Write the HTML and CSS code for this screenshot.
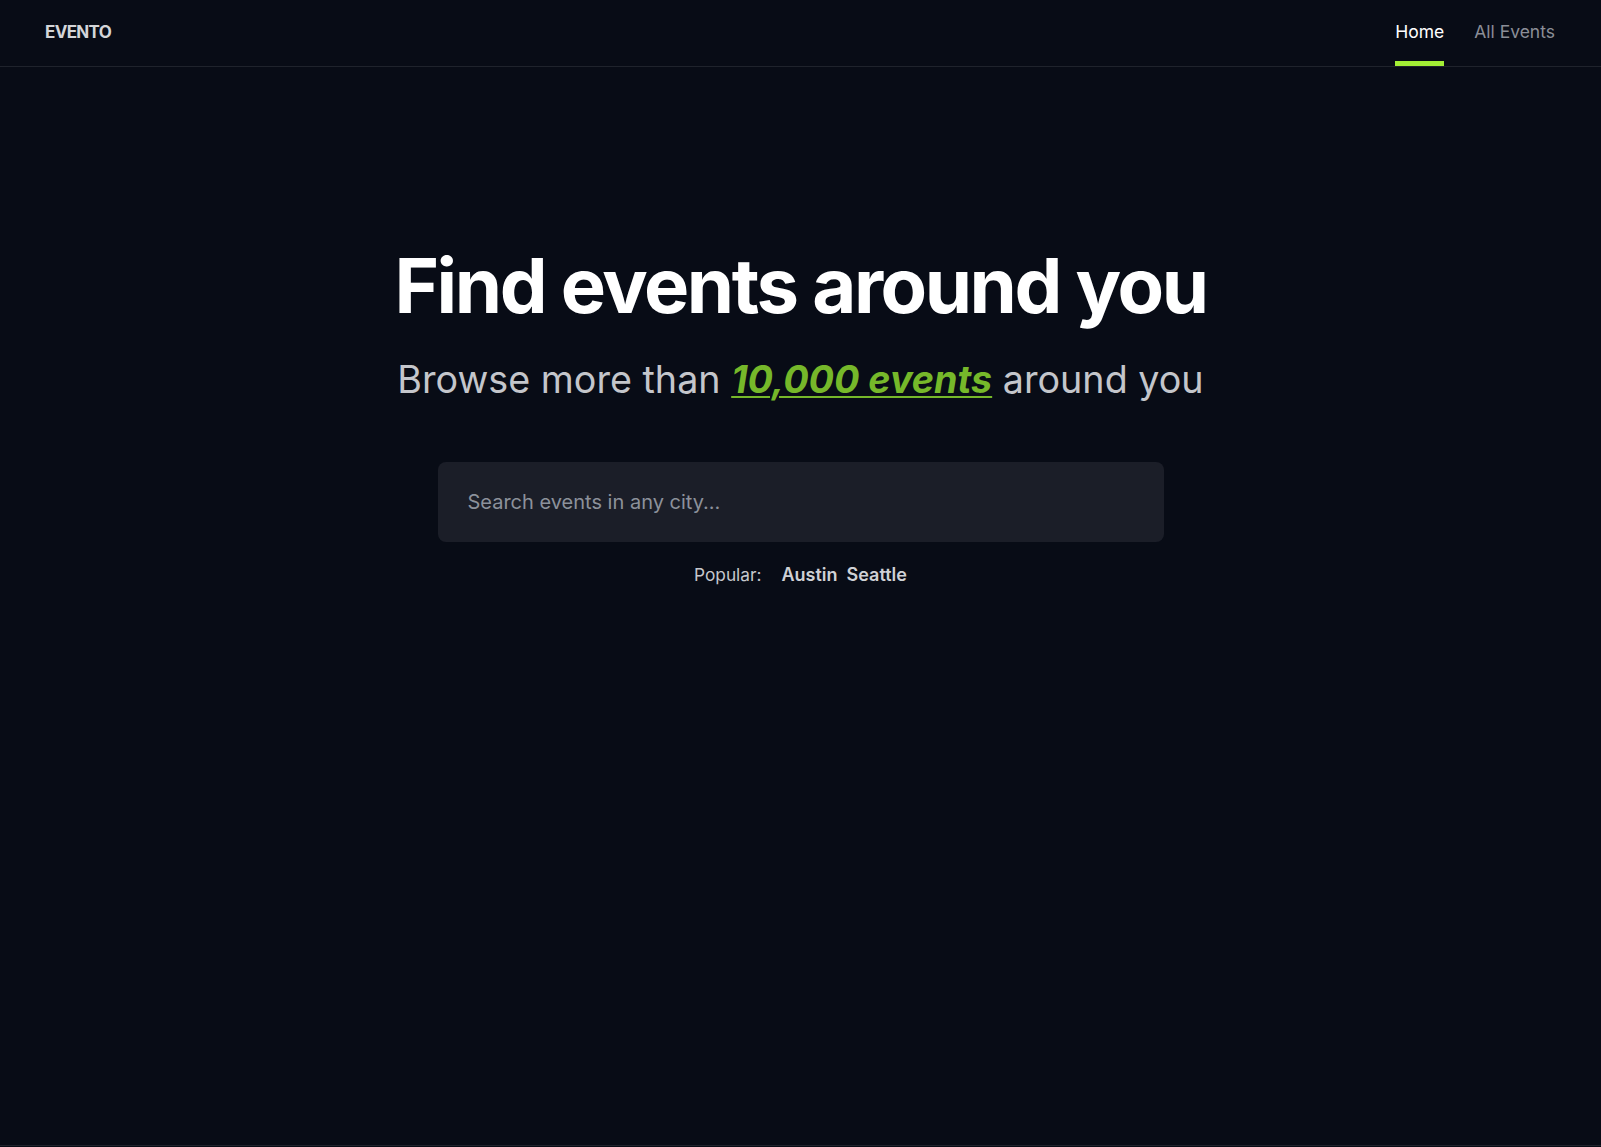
FILE: index.html
```html
<!DOCTYPE html>
<html lang="en">
<head>
    <meta charset="UTF-8">
    <meta name="viewport" content="width=device-width, initial-scale=1.0">
    <title>Evento - Find events around you</title>
    <link rel="stylesheet" href="styles.css">
</head>
<body>
    <header class="header">
        <a href="#" class="logo">EVENTO</a>
        <nav class="nav">
            <a href="#" class="nav-link active">Home</a>
            <a href="#" class="nav-link">All Events</a>
        </nav>
    </header>

    <main class="hero">
        <h1 class="hero-title">Find events around you</h1>
        <p class="hero-sub">Browse more than <a href="#" class="highlight">10,000 events</a> around you</p>

        <form class="search">
            <input type="text" class="search-input" placeholder="Search events in any city...">
        </form>

        <section class="popular">
            <p>Popular:</p>
            <div class="popular-links">
                <a href="#">Austin</a>
                <a href="#">Seattle</a>
            </div>
        </section>
    </main>

    <footer class="footer"></footer>
</body>
</html>
```

FILE: styles.css
```css
* {
    box-sizing: border-box;
}

body {
    margin: 0;
    padding: 0;
    font-family: 'Inter', 'Noto Sans', sans-serif;
    background-color: #080c16;
    color: #ffffff;
}

a {
    color: inherit;
    text-decoration: none;
}

.header {
    height: 67px;
    padding: 0 45px;
    display: flex;
    justify-content: space-between;
    align-items: center;
    border-bottom: 1px solid #1f232c;
}

.logo {
    margin-bottom: 2px;
    font-size: 17px;
    font-weight: 700;
    letter-spacing: -0.04em;
    color: #d4d5d8;
}

.nav {
    display: flex;
    gap: 30px;
    height: 100%;
    margin-right: 1px;
}

.nav-link {
    position: relative;
    display: flex;
    align-items: center;
    padding-bottom: 3px;
    font-size: 17.5px;
    color: #8b8e97;
}

.nav-link.active {
    color: #ffffff;
}

.nav-link.active::after {
    content: "";
    position: absolute;
    left: 0;
    right: 0;
    bottom: 0;
    height: 5px;
    background-color: #a3ef35;
}

.hero {
    min-height: 1078px;
    padding-top: 180px;
    display: flex;
    flex-direction: column;
    align-items: center;
    text-align: center;
}

.hero-title {
    margin: 0;
    font-size: 76px;
    line-height: 1;
    font-weight: 700;
    letter-spacing: -0.032em;
}

.hero-sub {
    margin: 34px 0 0;
    font-size: 37.7px;
    line-height: 1.2;
    color: #c4c6cb;
}

.highlight {
    color: #76b82a;
    font-weight: 700;
    font-style: italic;
    text-decoration: underline;
    text-decoration-thickness: 2px;
    text-underline-offset: 3px;
}

.search {
    margin-top: 60px;
    width: 726px;
}

.search-input {
    width: 100%;
    height: 80px;
    padding: 0 30px;
    border: none;
    border-radius: 8px;
    background-color: #1b1e28;
    color: #ffffff;
    font-family: inherit;
    font-size: 20px;
    outline: none;
}

.search-input::placeholder {
    color: #8c919b;
}

.popular {
    margin-top: 19px;
    display: flex;
    align-items: baseline;
    gap: 20px;
    font-size: 17.3px;
    line-height: 1.5;
    color: #c6c8cd;
}

.popular p {
    margin: 0;
}

.popular-links {
    display: flex;
    gap: 9px;
    font-size: 18px;
    font-weight: 600;
    color: #cfd1d5;
}

.footer {
    height: 2px;
    border-top: 1px solid #1f232c;
}
```
